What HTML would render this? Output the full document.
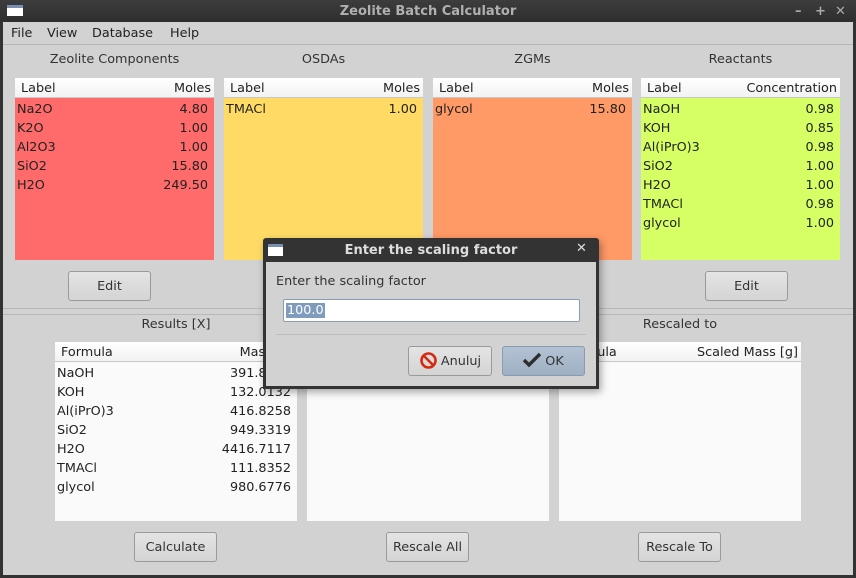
<!DOCTYPE html>
<html><head><meta charset="utf-8"><style>
*{box-sizing:border-box;margin:0;padding:0}
body{width:856px;height:578px;overflow:hidden;background:#333;font-family:"DejaVu Sans","Liberation Sans",sans-serif;font-size:12.8px;color:#222;position:relative}
.a{position:absolute}
.win{left:3px;top:22px;width:850px;height:553px;background:#d2d2d2}
.title{left:0;top:0;width:856px;height:22px;background:linear-gradient(#3d3d3d,#2e2e2e);color:#b0b0b0;font-weight:bold;font-size:13px;text-align:center;line-height:24px}
.menu span{position:absolute;top:4px}
.sec{text-align:center;color:#333}
.tbl{background:#fafafa}
.hd{height:20px;background:linear-gradient(#fff,#f2f2f2);border-bottom:1px solid #c8c8c8;position:relative;line-height:21px}
.hd .l{position:absolute;left:6px}
.hd .r{position:absolute;right:3px}
.row{height:19px;line-height:19px;position:relative}
.row .l{position:absolute;left:2px;top:2px}.row .r{position:absolute;right:6px;top:2px}
.btn{border:1px solid #9a9a9a;border-radius:3px;background:linear-gradient(#e4e4e4,#d4d4d4);text-align:center;line-height:29px;color:#333}
</style></head><body>
<div class="a title">Zeolite Batch Calculator
<div class="a" style="left:7px;top:5px;width:16px;height:11px;background:#fff;border-top:3px solid #7a8fb0"></div>
<span class="a" style="left:795px;top:0;color:#aaa">–</span><span class="a" style="left:815px;top:0;color:#aaa">+</span><span class="a" style="left:835px;top:0;color:#aaa">✕</span>
</div>
<div class="a win"></div>
<div class="a menu" style="left:0;top:22px;width:856px;height:22px">
<span style="left:11px">File</span><span style="left:47px">View</span><span style="left:92px">Database</span><span style="left:170px">Help</span></div>
<div class="a" style="left:3px;top:44px;width:850px;height:1px;background:#b5b5b5"></div>

<div class="a sec" style="left:15px;top:52px;width:199px">Zeolite Components</div>
<div class="a sec" style="left:224px;top:52px;width:199px">OSDAs</div>
<div class="a sec" style="left:433px;top:52px;width:199px">ZGMs</div>
<div class="a sec" style="left:641px;top:52px;width:199px">Reactants</div>

<div class="a tbl" style="left:15px;top:78px;width:199px;height:182px;background:#ff6b6b"><div class="hd"><span class="l">Label</span><span class="r">Moles</span></div>
<div class="row"><span class="l">Na2O</span><span class="r">4.80</span></div><div class="row"><span class="l">K2O</span><span class="r">1.00</span></div><div class="row"><span class="l">Al2O3</span><span class="r">1.00</span></div><div class="row"><span class="l">SiO2</span><span class="r">15.80</span></div><div class="row"><span class="l">H2O</span><span class="r">249.50</span></div></div>
<div class="a tbl" style="left:224px;top:78px;width:199px;height:182px;background:#ffdb66"><div class="hd"><span class="l">Label</span><span class="r">Moles</span></div>
<div class="row"><span class="l">TMACl</span><span class="r">1.00</span></div></div>
<div class="a tbl" style="left:433px;top:78px;width:199px;height:182px;background:#ff9966"><div class="hd"><span class="l">Label</span><span class="r">Moles</span></div>
<div class="row"><span class="l">glycol</span><span class="r">15.80</span></div></div>
<div class="a tbl" style="left:641px;top:78px;width:199px;height:182px;background:#d6ff66"><div class="hd"><span class="l">Label</span><span class="r">Concentration</span></div>
<div class="row"><span class="l">NaOH</span><span class="r">0.98</span></div><div class="row"><span class="l">KOH</span><span class="r">0.85</span></div><div class="row"><span class="l">Al(iPrO)3</span><span class="r">0.98</span></div><div class="row"><span class="l">SiO2</span><span class="r">1.00</span></div><div class="row"><span class="l">H2O</span><span class="r">1.00</span></div><div class="row"><span class="l">TMACl</span><span class="r">0.98</span></div><div class="row"><span class="l">glycol</span><span class="r">1.00</span></div></div>

<div class="a btn" style="left:68px;top:271px;width:83px;height:30px">Edit</div>
<div class="a btn" style="left:705px;top:271px;width:83px;height:30px">Edit</div>

<div class="a" style="left:3px;top:308px;width:850px;height:1px;background:#b8b8b8"></div>
<div class="a" style="left:3px;top:314px;width:850px;height:1px;background:#b8b8b8"></div>

<div class="a sec" style="left:55px;top:317px;width:242px">Results [X]</div>
<div class="a sec" style="left:559px;top:317px;width:242px">Rescaled to</div>

<div class="a tbl" style="left:55px;top:342px;width:242px;height:179px"><div class="hd"><span class="l">Formula</span><span class="r">Mass [g]</span></div>
<div class="row"><span class="l">NaOH</span><span class="r">391.8000</span></div><div class="row"><span class="l">KOH</span><span class="r">132.0132</span></div><div class="row"><span class="l">Al(iPrO)3</span><span class="r">416.8258</span></div><div class="row"><span class="l">SiO2</span><span class="r">949.3319</span></div><div class="row"><span class="l">H2O</span><span class="r">4416.7117</span></div><div class="row"><span class="l">TMACl</span><span class="r">111.8352</span></div><div class="row"><span class="l">glycol</span><span class="r">980.6776</span></div></div>
<div class="a tbl" style="left:307px;top:342px;width:242px;height:179px"><div class="hd"></div></div>
<div class="a tbl" style="left:559px;top:342px;width:242px;height:179px"><div class="hd"><span class="l">Formula</span><span class="r">Scaled Mass [g]</span></div></div>

<div class="a btn" style="left:134px;top:532px;width:83px;height:30px">Calculate</div>
<div class="a btn" style="left:386px;top:532px;width:83px;height:30px">Rescale All</div>
<div class="a btn" style="left:638px;top:532px;width:83px;height:30px">Rescale To</div>

<!-- dialog -->
<div class="a" style="left:263px;top:238px;width:336px;height:151px;background:#333;border-radius:3px 3px 0 0;box-shadow:2px 3px 8px rgba(0,0,0,.35)"></div>
<div class="a" style="left:263px;top:238px;width:336px;height:24px;color:#ddd;font-weight:bold;font-size:13px;text-align:center;line-height:25px">Enter the scaling factor</div>
<div class="a" style="left:268px;top:244px;width:15px;height:12px;background:#fff;border-top:3px solid #7a8fb0"></div>
<div class="a" style="left:576px;top:241px;color:#ddd;font-weight:bold;font-size:13px">✕</div>
<div class="a" style="left:266px;top:262px;width:330px;height:124px;background:#d2d2d2"></div>
<div class="a" style="left:276px;top:274px;color:#333">Enter the scaling factor</div>
<div class="a" style="left:283px;top:299px;width:297px;height:23px;background:#fff;border:1px solid #8a9cb5;border-radius:2px"><span style="position:absolute;left:2px;top:3px;background:#7f9bbd;color:#fff;line-height:15px;padding:0 1px">100.0</span></div>
<div class="a" style="left:276px;top:334px;width:310px;height:1px;background:#bcbcbc"></div>
<div class="a btn" style="left:408px;top:346px;width:84px;height:30px;padding-left:22px">Anuluj</div>
<svg class="a" style="left:420px;top:352px" width="17" height="17" viewBox="0 0 17 17"><circle cx="8.5" cy="8.5" r="7" fill="none" stroke="#d52a10" stroke-width="2.6"/><line x1="4" y1="4" x2="13" y2="13" stroke="#d52a10" stroke-width="2.6"/></svg>
<div class="a btn" style="left:502px;top:346px;width:83px;height:30px;background:linear-gradient(#b3c2d3,#9fb0c4);border-color:#8a9ab0;padding-left:22px">OK</div>
<svg class="a" style="left:522px;top:352px" width="20" height="16" viewBox="0 0 20 16"><path d="M2 8 L7 13 L18 2" fill="none" stroke="#2e2e2e" stroke-width="3.4"/></svg>
</body></html>
